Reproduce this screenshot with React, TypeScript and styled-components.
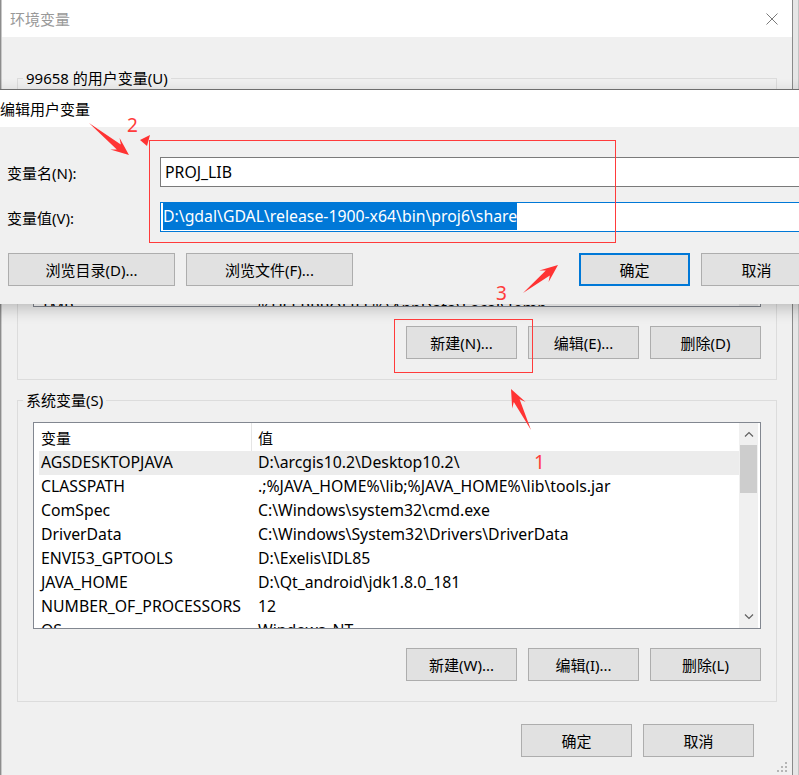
import React from 'react';
import styled, { createGlobalStyle, css } from 'styled-components';

const uiFont = `"Noto Sans", "Noto Sans CJK SC", sans-serif`;

const GlobalStyle = createGlobalStyle`
  html, body {
    margin: 0;
    padding: 0;
    background: #f0f0f0;
  }
  body {
    font-family: ${uiFont};
    font-size: 15px;
    color: #000;
  }
  * {
    box-sizing: border-box;
  }
`;

type Pair = [string, string];

const userVars: Pair[] = [
  ['GDAL_DATA', 'D:\\gdal\\GDAL\\release-1900-x64\\bin\\gdal-data'],
  ['GDAL_DRIVER_PATH', 'D:\\gdal\\GDAL\\release-1900-x64\\bin\\gdal\\plugins'],
  ['OneDrive', 'C:\\Users\\99658\\OneDrive'],
  ['Path', 'D:\\gdal\\GDAL\\release-1900-x64\\bin;C:\\Users\\99658\\AppData'],
  ['PYTHONPATH', 'D:\\gdal\\GDAL\\release-1900-x64\\bin\\gdal\\python'],
  ['QT_HOME', 'D:\\Qt_android\\Qt5.12.0'],
  ['TEMP', '%USERPROFILE%\\AppData\\Local\\Temp'],
  ['TMP', '%USERPROFILE%\\AppData\\Local\\Temp'],
];

const systemVars: Pair[] = [
  ['AGSDESKTOPJAVA', 'D:\\arcgis10.2\\Desktop10.2\\'],
  ['CLASSPATH', '.;%JAVA_HOME%\\lib;%JAVA_HOME%\\lib\\tools.jar'],
  ['ComSpec', 'C:\\Windows\\system32\\cmd.exe'],
  ['DriverData', 'C:\\Windows\\System32\\Drivers\\DriverData'],
  ['ENVI53_GPTOOLS', 'D:\\Exelis\\IDL85'],
  ['JAVA_HOME', 'D:\\Qt_android\\jdk1.8.0_181'],
  ['NUMBER_OF_PROCESSORS', '12'],
  ['OS', 'Windows_NT'],
];

// arrow drawn like a screenshot-tool arrow: thin tail, wide head
const arrowPoints = (x0: number, y0: number, x1: number, y1: number) => {
  const dx = x1 - x0;
  const dy = y1 - y0;
  const len = Math.hypot(dx, dy);
  const ux = dx / len;
  const uy = dy / len;
  const nx = -uy;
  const ny = ux;
  const headLen = 18;
  const neckX = x1 - ux * (headLen - 5);
  const neckY = y1 - uy * (headLen - 5);
  const barbX = x1 - ux * headLen;
  const barbY = y1 - uy * headLen;
  const shaft = 3.2;
  const head = 7.5;
  const pts = [
    [x0, y0],
    [neckX + nx * shaft, neckY + ny * shaft],
    [barbX + nx * head, barbY + ny * head],
    [x1, y1],
    [barbX - nx * head, barbY - ny * head],
    [neckX - nx * shaft, neckY - ny * shaft],
  ];
  return pts.map(([x, y]) => `${x.toFixed(1)},${y.toFixed(1)}`).join(' ');
};

const Screen = styled.div`
  position: relative;
  width: 799px;
  height: 775px;
  overflow: hidden;
  display: flex;
  background: #e8e8e8;
`;

const DesktopEdge = styled.div`
  flex: none;
  width: 2px;
  background: #c8c8c8;
  border-left: 1px solid #8d8d8d;
`;

const RightStrip = styled.div`
  flex: 1;
  background: #e6e6e6;
  border-right: 1px solid #c4c4c4;
`;

const EnvWindow = styled.div`
  position: relative;
  flex: none;
  width: 791px;
  display: flex;
  flex-direction: column;
  background: #f0f0f0;
  border-right: 1px solid #8a8a8a;
`;

const TitleBar = styled.div`
  height: 37px;
  flex: none;
  display: flex;
  align-items: center;
  justify-content: space-between;
  padding: 0 14px 0 8px;
  background: #fff;
`;

const TitleText = styled.span<{ $active?: boolean }>`
  font-size: 15px;
  color: ${({ $active }) => ($active ? '#000' : '#999')};
`;

const CloseGlyph = styled.svg`
  display: block;
  width: 12px;
  height: 12px;
`;

const WindowBody = styled.div`
  display: flex;
  flex-direction: column;
  padding: 31px 15px 0 15px;
`;

const GroupBox = styled.fieldset<{ $spaced?: boolean }>`
  margin: ${({ $spaced }) => ($spaced ? '10px 0 0' : '0')};
  padding: 12px 15px 20px;
  min-inline-size: 0;
  border: 1px solid #dcdcdc;
`;

const GroupLabel = styled.legend`
  margin-left: -10px;
  padding: 0 3px;
  line-height: 20px;
  font-size: 15px;
`;

const ListBox = styled.div`
  height: 207px;
  display: flex;
  background: #fff;
  border: 1px solid #828790;
  overflow: hidden;
`;

const ListContent = styled.div`
  flex: 1;
  min-width: 0;
  overflow: hidden;
`;

const ListHeader = styled.div`
  height: 28px;
  display: grid;
  grid-template-columns: 218px 1fr;
  align-items: stretch;
`;

const HeaderCell = styled.div<{ $first?: boolean }>`
  display: flex;
  align-items: center;
  padding-left: ${({ $first }) => ($first ? '7px' : '6px')};
  ${({ $first }) =>
    $first &&
    css`
      border-right: 1px solid #e5e5e5;
    `}
`;

const ListRow = styled.div<{ $selected?: boolean }>`
  height: 24px;
  margin-left: 5px;
  padding-bottom: 2px;
  display: grid;
  grid-template-columns: 212px 1fr;
  align-items: center;
  white-space: nowrap;
  font-size: 15.8px;
  background: ${({ $selected }) => ($selected ? '#ececec' : 'transparent')};
`;

const RowCell = styled.div<{ $first?: boolean }>`
  overflow: hidden;
  padding-left: ${({ $first }) => ($first ? '2px' : '7px')};
`;

const ScrollBar = styled.div`
  flex: none;
  width: 19px;
  margin-right: 2px;
  display: flex;
  flex-direction: column;
  background: #f0f0f0;
`;

const ScrollButton = styled.div`
  height: 22px;
  flex: none;
  display: flex;
  align-items: center;
  justify-content: center;
`;

const ScrollThumb = styled.div`
  height: 48px;
  flex: none;
  margin: 0 1px;
  background: #cdcdcd;
`;

const ScrollTrack = styled.div`
  flex: 1;
`;

const Chevron = styled.svg`
  display: block;
  width: 10px;
  height: 6px;
`;

const ButtonRow = styled.div<{ $spread?: boolean }>`
  display: flex;
  justify-content: ${({ $spread }) => ($spread ? 'space-between' : 'flex-end')};
  gap: 11px;
  margin-top: 19px;
`;

const BottomRow = styled(ButtonRow)`
  margin-top: 22px;
  padding-right: 23px;
`;

const ButtonGroup = styled.div`
  display: flex;
  gap: 11px;
`;

const WinButton = styled.div<{ $wide?: boolean; $default?: boolean }>`
  width: ${({ $wide }) => ($wide ? '167px' : '111px')};
  height: 33px;
  display: flex;
  align-items: center;
  justify-content: center;
  font-size: 15px;
  background: #e1e1e1;
  border: ${({ $default }) => ($default ? '2px solid #0078d7' : '1px solid #adadad')};
`;

const EditDialog = styled.div`
  position: absolute;
  top: 89px;
  left: -13px;
  width: 845px;
  display: flex;
  flex-direction: column;
  border-top: 1px solid #6e6e6e;
  box-shadow: 0 5px 14px rgba(0, 0, 0, 0.22);
  z-index: 2;
`;

const EditTitle = styled.div`
  height: 37px;
  display: flex;
  align-items: center;
  padding-left: 13px;
  background: #fff;
`;

const EditBody = styled.div`
  display: flex;
  flex-direction: column;
  gap: 15px;
  padding: 30px 20px 18px 21px;
  background: #f0f0f0;
`;

const FieldRow = styled.div`
  height: 30px;
  display: grid;
  grid-template-columns: 152px 1fr;
  align-items: center;
`;

const FieldLabel = styled.label`
  margin-left: -1px;
  font-size: 15px;
`;

const TextBox = styled.div<{ $focused?: boolean }>`
  height: 30px;
  display: flex;
  align-items: center;
  padding-left: ${({ $focused }) => ($focused ? '2px' : '4px')};
  padding-bottom: 1px;
  font-size: 15.8px;
  background: #fff;
  border: 1px solid ${({ $focused }) => ($focused ? '#0078d7' : '#7a7a7a')};
  white-space: nowrap;
`;

const Selection = styled.span`
  height: 27px;
  line-height: 26px;
  color: #fff;
  background: #0078d7;
`;

const EditButtons = styled(ButtonRow)`
  margin-top: 6px;
`;

const Annotations = styled.svg`
  position: absolute;
  left: 0;
  top: 0;
  width: 799px;
  height: 775px;
  pointer-events: none;
  z-index: 3;
`;

const Note = styled.text`
  font-family: "Noto Sans", sans-serif;
  font-size: 19px;
  fill: #ff3b3b;
`;

const ResizeGrip = styled.svg`
  position: absolute;
  right: 4px;
  bottom: 2px;
  width: 12px;
  height: 12px;
`;

const VariableList = ({ rows }: { rows: Pair[] }) => (
  <ListBox>
    <ListContent>
      <ListHeader>
        <HeaderCell $first>变量</HeaderCell>
        <HeaderCell>值</HeaderCell>
      </ListHeader>
      {rows.map(([name, value], i) => (
        <ListRow key={name} $selected={i === 0}>
          <RowCell $first>{name}</RowCell>
          <RowCell>{value}</RowCell>
        </ListRow>
      ))}
    </ListContent>
    <ScrollBar>
      <ScrollButton>
        <Chevron viewBox="0 0 10 6">
          <polyline points="1,5.5 5,1.5 9,5.5" fill="none" stroke="#606060" strokeWidth="1.2" />
        </Chevron>
      </ScrollButton>
      <ScrollThumb />
      <ScrollTrack />
      <ScrollButton>
        <Chevron viewBox="0 0 10 6">
          <polyline points="1,0.5 5,4.5 9,0.5" fill="none" stroke="#606060" strokeWidth="1.2" />
        </Chevron>
      </ScrollButton>
    </ScrollBar>
  </ListBox>
);

const App = () => {
  return (
    <>
      <GlobalStyle />
      <Screen>
        <DesktopEdge />
        <EnvWindow>
          <TitleBar>
            <TitleText>环境变量</TitleText>
            <CloseGlyph viewBox="0 0 12 12">
              <path d="M0.5 0.5 L11.5 11.5 M11.5 0.5 L0.5 11.5" stroke="#7a7a7a" strokeWidth="1" />
            </CloseGlyph>
          </TitleBar>
          <WindowBody>
            <GroupBox>
              <GroupLabel>99658 的用户变量(U)</GroupLabel>
              <VariableList rows={userVars} />
              <ButtonRow>
                <WinButton>新建(N)...</WinButton>
                <WinButton>编辑(E)...</WinButton>
                <WinButton>删除(D)</WinButton>
              </ButtonRow>
            </GroupBox>

            <GroupBox $spaced>
              <GroupLabel>系统变量(S)</GroupLabel>
              <VariableList rows={systemVars} />
              <ButtonRow>
                <WinButton>新建(W)...</WinButton>
                <WinButton>编辑(I)...</WinButton>
                <WinButton>删除(L)</WinButton>
              </ButtonRow>
            </GroupBox>

            <BottomRow>
              <WinButton>确定</WinButton>
              <WinButton>取消</WinButton>
            </BottomRow>
          </WindowBody>
          <ResizeGrip viewBox="0 0 12 12">
            <rect x="9" y="1" width="2" height="2" fill="#b5b5b5" />
            <rect x="5" y="5" width="2" height="2" fill="#b5b5b5" />
            <rect x="9" y="5" width="2" height="2" fill="#b5b5b5" />
            <rect x="1" y="9" width="2" height="2" fill="#b5b5b5" />
            <rect x="5" y="9" width="2" height="2" fill="#b5b5b5" />
            <rect x="9" y="9" width="2" height="2" fill="#b5b5b5" />
          </ResizeGrip>
        </EnvWindow>
        <RightStrip />

        <EditDialog>
          <EditTitle>
            <TitleText $active>编辑用户变量</TitleText>
          </EditTitle>
          <EditBody>
            <FieldRow>
              <FieldLabel>变量名(N):</FieldLabel>
              <TextBox>PROJ_LIB</TextBox>
            </FieldRow>
            <FieldRow>
              <FieldLabel>变量值(V):</FieldLabel>
              <TextBox $focused>
                <Selection>D:\gdal\GDAL\release-1900-x64\bin\proj6\share</Selection>
              </TextBox>
            </FieldRow>
            <EditButtons $spread>
              <ButtonGroup>
                <WinButton $wide>浏览目录(D)...</WinButton>
                <WinButton $wide>浏览文件(F)...</WinButton>
              </ButtonGroup>
              <ButtonGroup>
                <WinButton $default>确定</WinButton>
                <WinButton>取消</WinButton>
              </ButtonGroup>
            </EditButtons>
          </EditBody>
        </EditDialog>

        <Annotations viewBox="0 0 799 775">
          <rect x="149.5" y="140.5" width="466" height="102" fill="none" stroke="#ff3b3b" strokeWidth="1" />
          <rect x="394.5" y="319.5" width="138" height="53" fill="none" stroke="#ff3b3b" strokeWidth="1" />
          <polygon points={arrowPoints(89, 123, 129, 155)} fill="#ff3333" />
          <polygon points="140,140 150,135 147,146" fill="#ff3333" />
          <polygon points={arrowPoints(523, 293, 558, 265)} fill="#ff3333" />
          <polygon points={arrowPoints(531, 430, 511, 389)} fill="#ff3333" />
          <Note x="127" y="132">2</Note>
          <Note x="496" y="300">3</Note>
          <Note x="534" y="469">1</Note>
        </Annotations>
      </Screen>
    </>
  );
};

export default App;
